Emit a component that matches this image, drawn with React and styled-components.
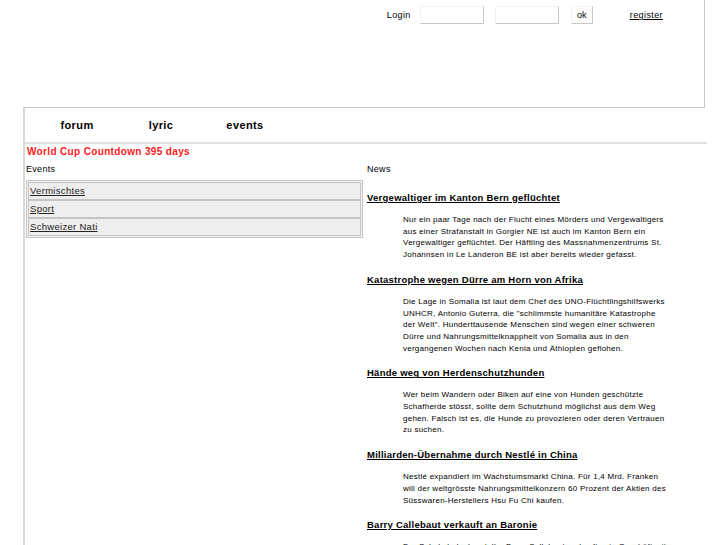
import React from 'react'
import styled, { createGlobalStyle } from 'styled-components'

const GlobalStyle = createGlobalStyle`
  body {
    margin: 0;
    background: #fff;
    font-family: "Liberation Sans", Arial, sans-serif;
    color: #000;
  }
`

const events = ['Vermischtes', 'Sport', 'Schweizer Nati']

const news = [
  {
    title: 'Vergewaltiger im Kanton Bern geflüchtet',
    text: 'Nur ein paar Tage nach der Flucht eines Mörders und Vergewaltigers aus einer Strafanstalt in Gorgier NE ist auch im Kanton Bern ein Vergewaltiger geflüchtet. Der Häftling des Massnahmenzentrums St. Johannsen in Le Landeron BE ist aber bereits wieder gefasst.'
  },
  {
    title: 'Katastrophe wegen Dürre am Horn von Afrika',
    text: 'Die Lage in Somalia ist laut dem Chef des UNO-Flüchtlingshilfswerks UNHCR, Antonio Guterra, die "schlimmste humanitäre Katastrophe der Welt". Hunderttausende Menschen sind wegen einer schweren Dürre und Nahrungsmittelknappheit von Somalia aus in den vergangenen Wochen nach Kenia und Äthiopien geflohen.'
  },
  {
    title: 'Hände weg von Herdenschutzhunden',
    text: 'Wer beim Wandern oder Biken auf eine von Hunden geschützte Schafherde stösst, sollte dem Schutzhund möglichst aus dem Weg gehen. Falsch ist es, die Hunde zu provozieren oder deren Vertrauen zu suchen.'
  },
  {
    title: 'Milliarden-Übernahme durch Nestlé in China',
    text: 'Nestlé expandiert im Wachstumsmarkt China. Für 1,4 Mrd. Franken will der weltgrösste Nahrungsmittelkonzern 60 Prozent der Aktien des Süsswaren-Herstellers Hsu Fu Chi kaufen.'
  },
  {
    title: 'Barry Callebaut verkauft an Baronie',
    text: 'Der Schokoladenhersteller Barry Callebaut verkauft sein Geschäft mit Konsumgütern in Belgien an die Baronie-Gruppe.'
  }
]

export default function App() {
  return (
    <>
      <GlobalStyle />
      <Header>
        <LoginBar>
          <LoginLabel>Login</LoginLabel>
          <Field type="text" />
          <Field type="password" />
          <OkButton>ok</OkButton>
          <Register href="#">register</Register>
        </LoginBar>
      </Header>
      <Main>
        <Nav>
          <NavItem>forum</NavItem>
          <NavItem>lyric</NavItem>
          <NavItem>events</NavItem>
        </Nav>
        <Countdown>World Cup Countdown 395 days</Countdown>
        <Columns>
          <LeftCol>
            <Label>Events</Label>
            <EventTable>
              {events.map(e => (
                <EventRow key={e}>
                  <a href="#">{e}</a>
                </EventRow>
              ))}
            </EventTable>
          </LeftCol>
          <RightCol>
            <Label>News</Label>
            <NewsList>
              {news.map(n => (
                <Article key={n.title}>
                  <Headline href="#">{n.title}</Headline>
                  <Teaser>{n.text}</Teaser>
                </Article>
              ))}
            </NewsList>
          </RightCol>
        </Columns>
      </Main>
    </>
  )
}

const Header = styled.div`
  margin-left: 23px;
  width: 681px;
  height: 107px;
  border-right: 1px solid #c8c8c8;
  border-bottom: 1px solid #c8c8c8;
`

const LoginBar = styled.div`
  display: flex;
  align-items: center;
  justify-content: flex-end;
  padding: 6px 41px 0 0;
  height: 18px;
  font-size: 9px;
  letter-spacing: 0.4px;
`

const LoginLabel = styled.span`
  margin-right: 9px;
`

const Field = styled.input`
  box-sizing: border-box;
  width: 64px;
  height: 18px;
  margin: 0 11px 0 0;
  padding: 0;
  border: 1px solid;
  border-color: #f4f4f4 #c8c8c8 #c8c8c8 #f4f4f4;
  background: #fff;
`

const OkButton = styled.button`
  box-sizing: border-box;
  width: 22px;
  height: 18px;
  margin: 0 37px 0 1px;
  padding: 0;
  font: 9px "Liberation Sans", Arial, sans-serif;
  color: #000;
  background: #fff;
  border: 1px solid;
  border-color: #f4f4f4 #c8c8c8 #c8c8c8 #f4f4f4;
`

const Register = styled.a`
  color: #000;
  text-decoration: underline;
`

const Main = styled.div`
  margin-left: 23px;
  width: 680px;
  min-height: 437px;
  border-left: 2px solid #d8d8d8;
`

const Nav = styled.div`
  display: flex;
  height: 34px;
  align-items: center;
  padding-left: 10px;
  border-bottom: 2px solid #e2e2e2;
  margin-right: -2px;
`

const NavItem = styled.a`
  width: 84px;
  text-align: center;
  font-size: 11px;
  letter-spacing: 0.4px;
  font-weight: bold;
  color: #000;
`

const Countdown = styled.div`
  padding: 1px 0 0 2px;
  height: 13px;
  line-height: 13px;
  font-size: 10px;
  letter-spacing: 0.35px;
  font-weight: bold;
  color: #ff1a1a;
`

const Columns = styled.div`
  display: flex;
  padding-top: 5px;
`

const LeftCol = styled.div`
  width: 338px;
  padding-left: 1px;
`

const RightCol = styled.div`
  flex: 1;
  padding-left: 3px;
`

const Label = styled.div`
  font-size: 9px;
  letter-spacing: 0.3px;
  line-height: 12px;
  height: 12px;
`

const EventTable = styled.div`
  margin-top: 5px;
  width: 333px;
  border: 1px solid #c4c4c4;
  padding: 1px;
  background: #f4f4f4;
  display: flex;
  flex-direction: column;
`

const EventRow = styled.div`
  height: 16px;
  line-height: 16px;
  border: 1px solid #c4c4c4;
  background: #eee;
  font-size: 9.5px;
  letter-spacing: 0.3px;
  padding-left: 1px;
  a {
    color: #222;
  }
`

const NewsList = styled.div`
  padding-top: 4px;
`

const Article = styled.div`
  margin-top: 13px;
`

const Headline = styled.a`
  display: block;
  font-size: 9.5px;
  letter-spacing: 0.25px;
  line-height: 12px;
  font-weight: bold;
  color: #000;
  text-decoration: underline;
`

const Teaser = styled.p`
  margin: 10px 0 0 36px;
  width: 264px;
  font-size: 8px;
  letter-spacing: 0.25px;
  line-height: 11.7px;
`
